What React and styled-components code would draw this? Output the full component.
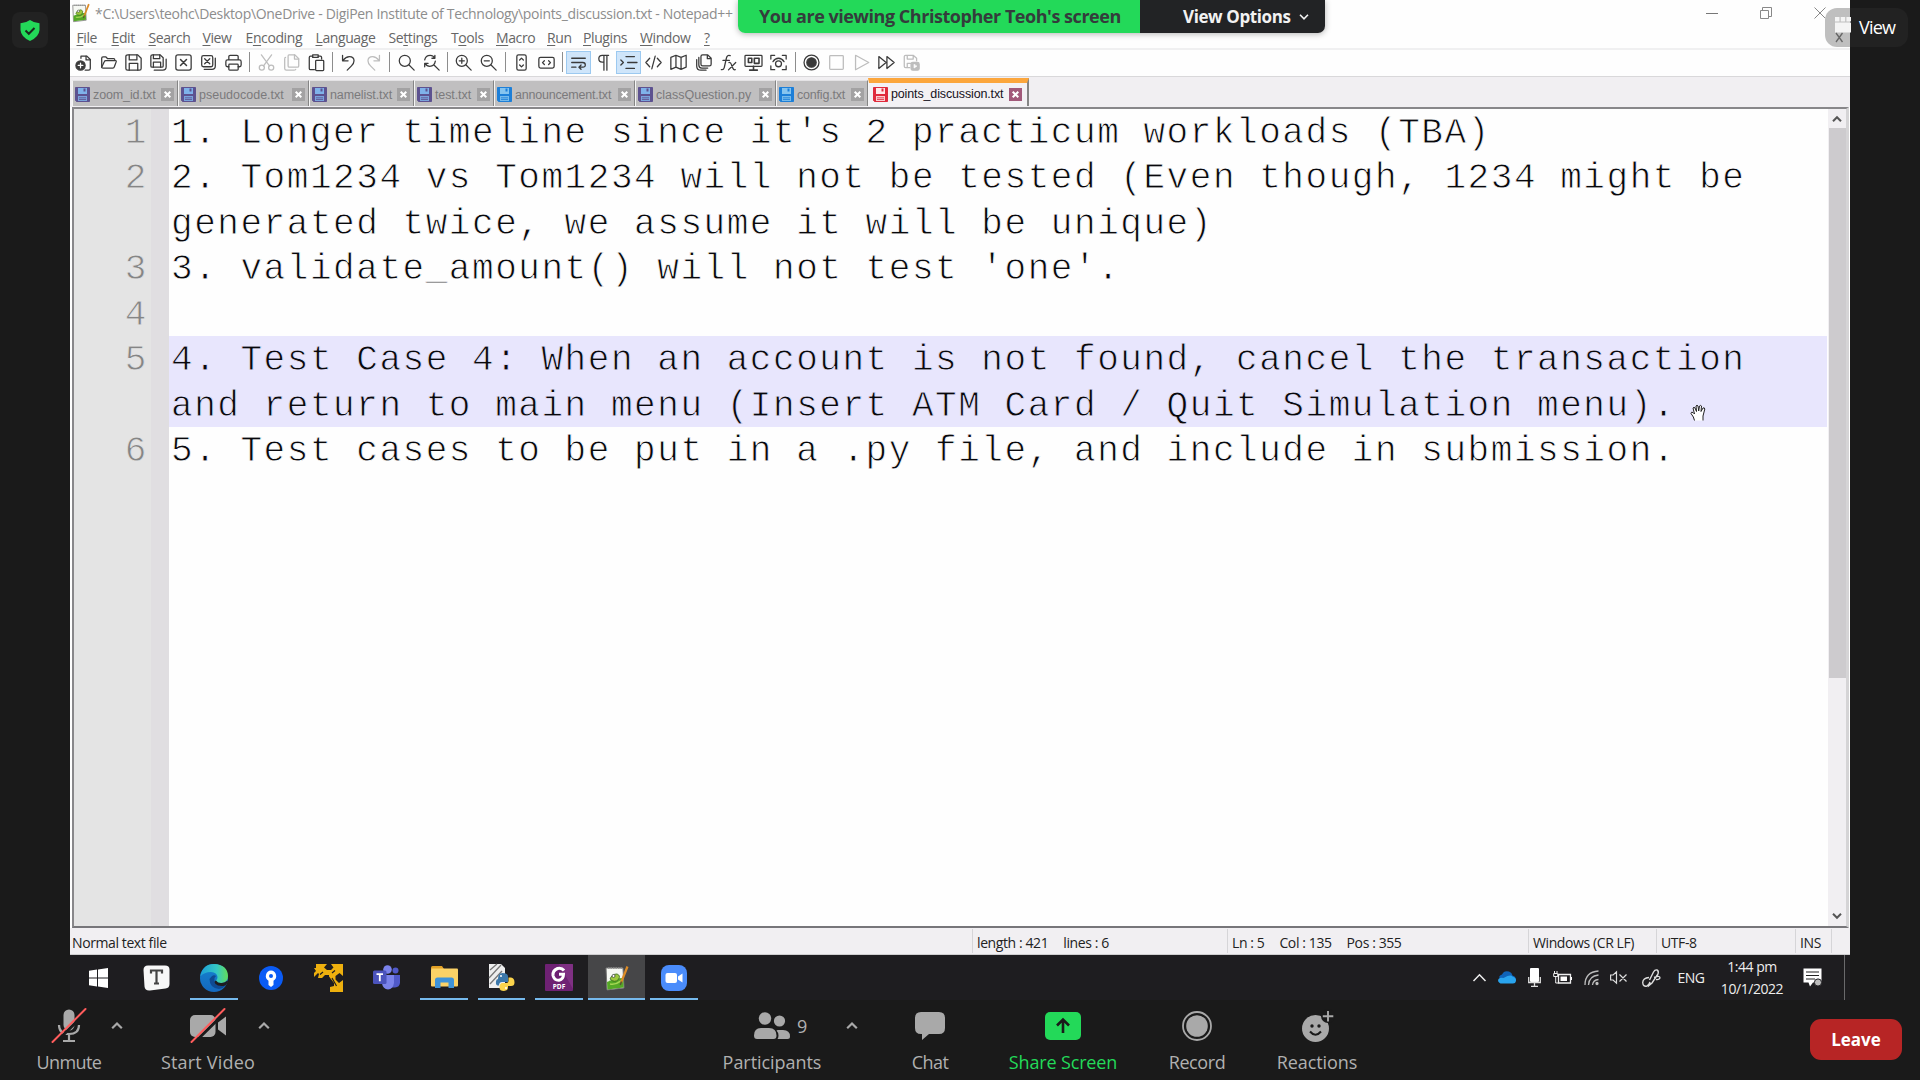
import React from "react";
import styled, { createGlobalStyle, css } from "styled-components";

const ui = `"Open Sans", "Noto Sans", sans-serif`;

const GlobalStyle = createGlobalStyle`
  * { box-sizing: border-box; }
  body { margin: 0; background: #1a1a1a; overflow: hidden; font-family: ${ui}; }
  svg { display: block; flex: none; overflow: visible; }
`;

/* ---------- meeting window ---------- */
const Meeting = styled.div`
  width: 1920px;
  height: 1080px;
  display: flex;
  flex-direction: column;
  background: #1a1a1a;
  position: relative;
`;
const Stage = styled.div`
  display: grid;
  grid-template-columns: 70px 1780px 70px;
  height: 1000px;
`;
const Side = styled.div`
  padding: 12px 0 0 12px;
`;
const ShieldButton = styled.div`
  width: 36px;
  height: 36px;
  border-radius: 8px;
  background: #222;
  display: grid;
  place-items: center;
`;
const Banner = styled.div`
  position: absolute;
  top: 0;
  left: 738px;
  width: 587px;
  height: 33px;
  display: flex;
  border-radius: 0 0 7px 7px;
  overflow: hidden;
  font-weight: 700;
  line-height: 33px;
  white-space: nowrap;
  box-shadow: 0 1px 6px rgba(0, 0, 0, 0.3);
`;
const BannerText = styled.div`
  width: 402px;
  background: #23d959;
  color: #343c3c;
  padding-left: 21px;
  font-size: 18px;
  letter-spacing: -0.46px;
`;
const BannerMenu = styled.div`
  flex: 1;
  background: #222325;
  color: #f2f2f2;
  padding-left: 43px;
  display: flex;
  align-items: center;
  gap: 9px;
  font-size: 17px;
  letter-spacing: -0.4px;
`;
const ViewButton = styled.div`
  position: absolute;
  top: 8px;
  left: 1825px;
  width: 83px;
  height: 39px;
  border-radius: 12px;
  background: linear-gradient(90deg, #bfbfbf 25px, #222 25px);
  display: flex;
  align-items: center;
  padding: 0 0 2px 10px;
  gap: 8px;
  color: #fff;
  font-size: 18px;
  letter-spacing: -0.8px;
`;
const Cursor = styled.div`
  position: absolute;
  left: 1690px;
  top: 404px;
`;

/* ---------- editor window ---------- */
const Desktop = styled.div`
  display: flex;
  flex-direction: column;
  background: #fefefe;
`;
const TitleBar = styled.div`
  height: 26px;
  display: flex;
  align-items: center;
  padding-left: 2px;
  gap: 5px;
  font-size: 14px;
  letter-spacing: -0.32px;
  color: #8d8d8d;
  white-space: nowrap;
`;
const WindowButtons = styled.div`
  margin-left: auto;
  display: flex;
  align-items: center;
  gap: 42px;
  padding-right: 24px;
`;
const MenuBar = styled.div`
  height: 24px;
  display: flex;
  align-items: center;
  padding: 2px 0 0 6.5px;
  border-bottom: 2px solid #f0f0f1;
  font-size: 14px;
  letter-spacing: -0.4px;
  color: #666;
`;
const MenuItem = styled.div`
  width: ${(p) => p.$w}px;
  white-space: nowrap;
  line-height: 20px;
  & > u { text-underline-offset: 2px; }
`;
const Toolbar = styled.div`
  height: 27px;
  display: flex;
  align-items: center;
  padding: 0 0 2px 1px;
  border-bottom: 1px solid #d9d8da;
`;
const Tool = styled.div`
  width: 25px;
  height: 23px;
  display: grid;
  place-items: center;
  color: ${(p) => (p.$off ? "#bdbdbd" : "#3a3a3a")};
  ${(p) => p.$on && css`background: #cfe5fa; box-shadow: inset 0 0 0 1px #9cc9f0;`}
`;
const ToolGap = styled.div`
  width: 7.57px;
  height: 20px;
  display: flex;
  justify-content: center;
  &::after { content: ""; width: 1px; background: #8d8d8d; }
`;
const TabBar = styled.div`
  height: 30px;
  background: #f1eff2;
  display: flex;
  align-items: flex-end;
  padding: 0 0 1px 2px;
`;
const Tab = styled.div`
  width: ${(p) => p.$w}px;
  height: ${(p) => (p.$active ? 28 : 26)}px;
  display: flex;
  align-items: center;
  padding: ${(p) => (p.$active ? "0 5px 1px 4px" : "2px 3px 0 2px")};
  background: ${(p) => (p.$active ? "#f3f1f4" : "#c0bfc0")};
  border-top: ${(p) => (p.$active ? "5px solid #fca63c" : "1px solid #e4e3e5")};
  border-left: 1px solid #f5f5f5;
  border-right: ${(p) => (p.$active ? 2 : 1)}px solid #858585;
  color: ${(p) => (p.$active ? "#16121c" : "#7b7a7c")};
  font: 12.5px "Liberation Sans", Arial, sans-serif;
  letter-spacing: ${(p) => p.$ls || 0}px;
  white-space: nowrap;
`;
const TabName = styled.span`
  margin-left: 3px;
`;
const TabClose = styled.span`
  margin-left: auto;
  width: 13px;
  height: 13px;
  background: ${(p) => (p.$active ? "#a2597a" : "#a3a2a3")};
  display: grid;
  place-items: center;
  color: #fff;
`;
const Editor = styled.div`
  height: 821px;
  margin: 0 1px 0 2px;
  display: grid;
  grid-template-columns: 77px 18px 1fr 18px;
  border: 2px solid #88878a;
  border-right-width: 3px;
  border-right-color: #d5d4d6;
  border-bottom-color: #77767a;
  font: 36px/45.43px "Liberation Mono", "Courier New", monospace;
  letter-spacing: 1.55px;
  color: #08080c;
`;
const Numbers = styled.div`
  background: #e4e4e4;
  color: #858585;
  text-align: right;
  padding-right: 3px;
  -webkit-text-stroke: 0.8px #e4e4e4;
`;
const NumberCell = styled.div`
  height: ${(p) => p.$rows * 45.43}px;
  padding-top: 2px;
`;
const Fold = styled.div`
  background: #e0dee1;
`;
const Lines = styled.div`
  background: #fefefe;
`;
const TextLine = styled.div`
  height: ${(p) => p.$rows * 45.43}px;
  padding: 2px 0 0 2px;
  margin-right: 1px;
  white-space: pre;
  background: ${(p) => (p.$current ? "#e8e6fd" : "#fefefe")};
  -webkit-text-stroke: 0.8px ${(p) => (p.$current ? "#e8e6fd" : "#fefefe")};
`;
const ScrollBar = styled.div`
  background: #f1eff2;
  display: flex;
  flex-direction: column;
  align-items: center;
`;
const ScrollArrow = styled.div`
  height: 19px;
  display: grid;
  place-items: center;
  margin-top: ${(p) => (p.$bottom ? "auto" : 0)};
  padding-bottom: ${(p) => (p.$bottom ? 2 : 0)}px;
`;
const Thumb = styled.div`
  width: 17px;
  height: 550px;
  background: #cdcbce;
`;
const StatusBar = styled.div`
  height: 27px;
  background: #f1eff2;
  border-bottom: 1px solid #cfced0;
  display: flex;
  align-items: center;
  font-size: 14px;
  letter-spacing: -0.4px;
  color: #222;
`;
const StatusCell = styled.div`
  width: ${(p) => p.$w}px;
  height: 24px;
  line-height: 27px;
  display: flex;
  gap: ${(p) => p.$gap || 0}px;
  padding-left: ${(p) => p.$pad || 4}px;
  border-right: 1px solid #d6d5d8;
  white-space: nowrap;
`;

/* ---------- windows taskbar ---------- */
const Taskbar = styled.div`
  height: 45px;
  background: #1e1d20;
  display: flex;
`;
const Task = styled.div`
  width: 57.55px;
  height: 45px;
  position: relative;
  display: grid;
  place-items: center;
  background: ${(p) => (p.$active ? "#464648" : "transparent")};
  ${(p) => p.$open && css`
    &::after {
      content: "";
      position: absolute;
      bottom: 0;
      left: ${p.$active ? 0 : 5}px;
      right: ${p.$active ? 0 : 5}px;
      height: 2px;
      background: #76b9ed;
    }
  `}
`;
const Tray = styled.div`
  margin-left: auto;
  display: flex;
  align-items: center;
  color: #eee;
  font-size: 14px;
`;
const TrayCell = styled.div`
  width: ${(p) => p.$w}px;
  display: grid;
  place-items: center;
  letter-spacing: -0.5px;
`;
const Clock = styled.div`
  width: 82px;
  text-align: center;
  font-size: 14px;
  line-height: 21.5px;
  letter-spacing: -0.45px;
`;
const ShowDesktop = styled.div`
  width: 6px;
  height: 45px;
  margin-left: 13px;
  border-left: 1px solid #6a6a6c;
`;

/* ---------- meeting controls ---------- */
const Controls = styled.div`
  height: 80px;
  display: flex;
  color: #a9a9a9;
`;
const Control = styled.div`
  width: ${(p) => p.$w}px;
  margin-left: ${(p) => p.$ml}px;
  display: flex;
  flex-direction: column;
  align-items: center;
  font-size: 18px;
  letter-spacing: ${(p) => p.$ls ?? -0.2}px;
  white-space: nowrap;
  color: ${(p) => (p.$green ? "#23d959" : "#b0b0b0")};
`;
const ControlIcon = styled.div`
  height: 52px;
  display: flex;
  align-items: center;
  gap: 7px;
  padding-left: ${(p) => p.$shift || 0}px;
`;
const ControlLabel = styled.div`
  line-height: 20px;
`;
const CaretBox = styled.div`
  width: 14px;
  height: 52px;
  margin-left: ${(p) => p.$ml || 0}px;
  display: grid;
  place-items: center;
`;
const Leave = styled.div`
  margin: 19px 18px 0 auto;
  width: 92px;
  height: 41px;
  border-radius: 11px;
  background: #b72525;
  color: #fff;
  font-weight: 700;
  font-size: 17px;
  line-height: 41px;
  text-align: center;
`;

/* ---------- icons ---------- */
const Line = ({ children, s = 19, w = 1.5 }) => (
  <svg width={s} height={s} viewBox="0 0 20 20" fill="none" stroke="currentColor" strokeWidth={w} strokeLinejoin="round" strokeLinecap="round">
    {children}
  </svg>
);
const Chevron = ({ up, w = 10, sw = 2, color = "currentColor" }) => (
  <svg width={w} height={w * 0.6} viewBox="0 0 10 6" fill="none" stroke={color} strokeWidth={sw}>
    <path d={up ? "M1 5.3 5 1.2 9 5.3" : "M1 .8 5 4.8 9 .8"} />
  </svg>
);
const Cross = ({ s = 7, w = 2 }) => (
  <svg width={s} height={s} viewBox="0 0 7 7" stroke="currentColor" strokeWidth={w}>
    <path d="M.7.7l5.6 5.6M6.3.7.7 6.3" />
  </svg>
);

const tools = [
  [<><path d="M7 5V2.500h7l4 4V17q0 2-2 2h-4" /><path d="M13 2.500V7h5" /><circle cx="6.500" cy="13.500" r="5.400" fill="currentColor" /><path d="M6.500 10.800v5.400M3.800 13.500h5.400" stroke="#fff" /></>],
  [<><path d="M2 15.500V5q0-1.500 1.500-1.500H7L9 5.500h7q1.500 0 1.500 2" /><path d="M2 15.500 5 9q.5-1.200 2-1.200h11q1.500 0 1 1.500l-2 5.500q-.5 1.700-2 1.700H3.500q-1.500 0-1.500-1Z" /></>],
  [<><path d="M3.500 1H15l4 4v12q0 2-2 2H3q-2 0-2-2V3q0-2 2.500-2Z" /><path d="M5 1v6h9V1M5 19v-8h10v8" /></>],
  [<><path d="M3 1H12l3.500 3.500v9.500q0 1.500-1.500 1.500H2.500Q1 15.500 1 14V2.500Q1 1 3 1Z" /><path d="M4 1v4.500h7.500V1M4 15.500v-6h8.500v6M5 19h10q4 0 4-4V6" /></>],
  [<><rect x="1" y="1" width="18" height="18" rx="2.500" /><path d="M6.500 6.500l7 7M13.500 6.500l-7 7" strokeWidth="1.800" /></>],
  [<><rect x="2" y="2" width="13" height="13" rx="2" /><path d="M5.500 5.500l6 6M11.500 5.500l-6 6M5 18h9q4 0 4-4V5" /></>],
  [<><path d="M4.500 7V3q0-1.500 1.500-1.500h8q1.500 0 1.500 1.500v4M4.500 15H3q-2 0-2-2V9q0-2 2-2h14q2 0 2 2v4q0 2-2 2h-1.500" /><rect x="4.500" y="12" width="11" height="7" rx="1" /></>],
  null,
  [<><path d="M4 1l9.500 13M16 1 6.500 14" /><circle cx="4.500" cy="16" r="3" /><circle cx="15.500" cy="16" r="3" /></>, "off"],
  [<><path d="M7 1h7l4.500 4.500V14q0 1.500-1.500 1.500H7.500Q6 15.500 6 14V2.500Q6 1 7 1Z" /><path d="M13.500 1v5h5M3 4Q2 4 2 6v11q0 2 2 2h9q2 0 2-1" /></>, "off"],
  [<><path d="M7.500 18.500H3q-1.500 0-1.500-1.500V4q0-1.500 1.500-1.500h2.500M12 2.500h2.500Q16 2.500 16 4v2" /><path d="M5.500 1h6.500v3H5.500Z" /><rect x="9" y="7.500" width="9.500" height="12" rx="1" /></>],
  null,
  [<path d="M3 1.500V8h6.500M3.500 7.500Q7 3 11 3q5.500 0 5.500 5 0 3-3 6l-5 5" />],
  [<path d="M17 1.500V8h-6.500M16.500 7.500Q13 3 9 3 3.500 3 3.500 8q0 3 3 6l5 5" />, "off"],
  null,
  [<><circle cx="8" cy="8" r="6.500" /><path d="M13 13l6 6" /></>],
  [<><path d="M2 7q1-5.500 6.500-5.500 3.500 0 5 3M14 1.500V5h-3.500M14.500 8.500q-1 6-6.500 6-3.500 0-5.500-3.500M2 15v-4h4M13.500 13.500l5.500 5.500" /></>],
  null,
  [<><circle cx="8" cy="8" r="6.500" /><path d="M13 13l6 6M8 5v6M5 8h6" /></>],
  [<><circle cx="8" cy="8" r="6.500" /><path d="M13 13l6 6M5 8h6" /></>],
  null,
  [<><rect x="4.500" y="1" width="11" height="18" rx="2" /><path d="M7.800 7 10 4.800 12.200 7M7.800 13l2.200 2.200 2.200-2.200" /></>],
  [<><rect x="1" y="4" width="18" height="12.500" rx="2" /><path d="M7.500 8 5.300 10.200l2.200 2.200M12.500 8l2.200 2.200-2.200 2.200" /></>],
  null,
  [<><path d="M2 5h16M2 10h13q3 0 3 2.800T15 15.500h-4M2 15.500h5M13 13l-2.500 2.500L13 18" /></>, "on"],
  [<><path d="M16 1.500H8.500q-4 0-4 4t4 4H10M10.500 1.500V19M14 1.500V19" /></>],
  [<><path d="M7 3h10M9 10h11M7 17h10M1 7l3 3-3 3" /></>, "on"],
  [<><path d="M5.500 5 1 10l4.500 5M14.500 5l4.500 5-4.500 5M12 2.500 8 17.500" /></>],
  [<><path d="M1 4l6-2.500 6 2.500 6-2.500v14L13 18l-6-2.500L1 18ZM7 1.500v14M13 4v14" /></>],
  [<><path d="M9 1h6l4 4v7q0 2-2 2H9q-2 0-2-2V3q0-2 2-2ZM14.500 1v4.500H19" /><path d="M4.500 4v9q0 3.500 3.500 3.500h7M2 6.500V14q0 5 5 5h6" /></>],
  [<><path d="M12 2q-3.500-1.500-4.500 3L5 16q-.8 3-3.500 2.300M3.500 7.500H11" /><path d="M10.500 10q2-.5 3 2.500l1.500 4q1 2.500 3 2M18.500 10 10 18.700" /></>],
  [<><rect x="0" y="1.500" width="20" height="13" rx="1" /><path d="M4 5h4v5h-4ZM11 5h5.500v6h-5.500ZM10 14.500V19M5.500 19h9" strokeWidth="1.900" /></>],
  [<><path d="M1 6V1.500h4.500M14.500 1.500H19V6M19 14v4.500h-4.500M5.500 18.500H1V14M3.500 9q2.500-4 6.500-4t6.500 4" /><circle cx="10" cy="11.500" r="3.500" /></>],
  null,
  [<><circle cx="10" cy="10" r="8.800" /><circle cx="10" cy="10" r="5.500" fill="currentColor" /></>],
  [<rect x="2" y="2" width="16" height="16" rx="1" />, "off"],
  [<path d="M3 1.500 18.500 10 3 18.500Z" />, "off"],
  [<path d="M1 3l8.500 7L1 17ZM10.500 3l8.500 7-8.500 7Z" />],
  [<><path d="M8 16H3q-1.500 0-1.500-1.500V3Q1.500 1.500 3 1.500h9L16 5v3M5 1.500V6h7V1.500M5 16v-5h4" /><rect x="9.500" y="10" width="9.500" height="9" rx="2" fill="currentColor" /><path d="M13 12.500v4l3-2Z" stroke="#fff" fill="#fff" strokeWidth=".8" /></>, "off"],
];

const floppyColors = {
  violet: ["#5d5290", "#7fb2ea"],
  blue: ["#1d7fd8", "#86c4ef"],
  red: ["#e02a3c", "#ffe9ea"],
};
const Floppy = ({ kind }) => {
  const [a, b] = floppyColors[kind];
  return (
    <svg width="15" height="15" viewBox="0 0 15 15">
      <path d="M.5.5h14v14h-13l-1-1Z" fill={a} stroke={a} />
      <path d="M3 1h9v6H3Z" fill={b} />
      <path d="M8.500 1.500h2v3h-2Z" fill={a} />
      <path d="M3 9h9v5H3Z" fill={b} opacity=".85" />
      <path d="M4 10.800h7M4 12.500h7" stroke={a} strokeWidth=".8" />
    </svg>
  );
};
const NppIcon = ({ s = 18 }) => (
  <svg width={s} height={s * 1.08} viewBox="0 0 24 26">
    <path d="M1 3h17l1 20-17 2Z" fill="#f6f8f3" stroke="#777" strokeWidth="1" />
    <path d="M2 17q8-4 16.300-4l.4 9.500-16.300 2Z" fill="#55a826" />
    <path d="M5 14q2-5 7-5 4 1.500 1.500 5.500-4 4-8.500-.5Z" fill="#9cc83c" stroke="#35651c" strokeWidth=".8" />
    <circle cx="8.500" cy="11" r="1.500" fill="#fff" stroke="#333" strokeWidth=".7" />
    <path d="M5 19q6 1 11-3" stroke="#a5d653" strokeWidth="1.500" fill="none" />
    <path d="M3 3h14" stroke="#8c8c8c" strokeWidth="1.500" strokeDasharray="1.500 1" />
    <path d="M22.500 1.500 16 18" stroke="#dc8b26" strokeWidth="2.300" />
    <path d="M16.500 16.500 15.300 20" stroke="#553" strokeWidth="1.500" />
  </svg>
);

const tabs = [
  ["zoom_id.txt", 106, "violet", -0.12],
  ["pseudocode.txt", 131, "violet", 0],
  ["namelist.txt", 105, "violet", -0.1],
  ["test.txt", 80, "violet", -0.1],
  ["announcement.txt", 141, "blue", -0.2],
  ["classQuestion.py", 141, "violet", 0],
  ["config.txt", 92, "blue", -0.2],
  ["points_discussion.txt", 161, "red", -0.14],
];

const menus = [
  ["", "F", "ile", 35], ["", "E", "dit", 37], ["", "S", "earch", 54], ["", "V", "iew", 43],
  ["E", "n", "coding", 70], ["", "L", "anguage", 73], ["Se", "t", "tings", 62.5], ["T", "o", "ols", 45],
  ["", "M", "acro", 51], ["", "R", "un", 36], ["", "P", "lugins", 57], ["", "W", "indow", 64], ["", "?", "", 20],
];

const doc = [
  ["1. Longer timeline since it's 2 practicum workloads (TBA)"],
  ["2. Tom1234 vs Tom1234 will not be tested (Even though, 1234 might be", "generated twice, we assume it will be unique)"],
  ["3. validate_amount() will not test 'one'."],
  [""],
  ["4. Test Case 4: When an account is not found, cancel the transaction", "and return to main menu (Insert ATM Card / Quit Simulation menu)."],
  ["5. Test cases to be put in a .py file, and include in submission."],
];

const tasks = [
  { icon: <svg width="19" height="20" viewBox="0 0 19 20" fill="#fff"><path d="M0 2.800 8 1.600v7.900H0ZM9 1.400 19 0v9.500H9ZM0 10.500h8v7.900L0 17.200ZM9 10.500h10V20L9 18.600Z" /></svg> },
  { icon: <svg width="27" height="26" viewBox="0 0 27 26"><path d="M5 .5h17q4.500 0 4.500 4V19q0 4-4 4.500L7 25.500q-5 .5-5.500-4L.5 5q0-4.500 4.500-4.500Z" fill="#f7f7f7" /><path d="M8 8.500V5.500h11v3M13.500 5.500v13M11 18.500h5" stroke="#444" strokeWidth="2.200" fill="none" /></svg> },
  { open: true, icon: (
    <svg width="28" height="28" viewBox="0 0 28 28">
      <defs>
        <linearGradient id="eg" x1="0" x2="1"><stop offset="0" stopColor="#1c9ed8" /><stop offset=".6" stopColor="#35c8c4" /><stop offset="1" stopColor="#63dd58" /></linearGradient>
        <linearGradient id="eb" x1="0" y1="0" x2="0" y2="1"><stop offset="0" stopColor="#1583d0" /><stop offset="1" stopColor="#1468bd" /></linearGradient>
      </defs>
      <circle cx="14" cy="14" r="14" fill="url(#eb)" />
      <path d="M.3 12.500Q2.500 0 14 0q13.500.5 14 12 0 6.500-7 7-5 0-5-2.500 1.500-1.500 1.500-3.500-.5-4.500-6.500-5-7 0-10.700 4.500Z" fill="url(#eg)" />
      <path d="M9.500 15q0 9 9.500 10 4-.5 6.500-3.500-3 .8-6 0-6-1.500-5-7.500l1.500-2q-3-2.500-6.500 3Z" fill="#0f4a92" />
      <path d="M16 16.500q2 3 6 2.500 3-.3 5.500-2.500l.5 1.500-2.500 3.500q-7 1.500-10-1.500-2-3 .5-3.500Z" fill="#1e1d20" />
    </svg>) },
  { icon: <svg width="24" height="24" viewBox="0 0 24 24"><circle cx="12" cy="12" r="12" fill="#0a5bf5" /><path d="M12 4.500a5.500 5.500 0 0 1 2.500 10.200V19L12 21l-2.500-2v-4.300A5.500 5.500 0 0 1 12 4.500Z" fill="#fff" /><circle cx="12" cy="10" r="2" fill="#0a5bf5" /></svg> },
  { icon: <svg width="29" height="28" viewBox="0 0 29 28" fill="#eeb00e"><path d="M0 4h2V0h11l-3 3.500 3 2.500h4l2.500-2.500L17 0h12v12l-3.500-3-4 3v3.500l3.500 3.500 4-3v12H16v-5l4-1v-3l-5-6.500V11h-4l-3 3H4l1-4-1-1-4 4V9l2-2Z" /><path d="M9 8 6 10.500M18 9l3-2.500M18 14l4.500 8" stroke="#1e1d20" strokeWidth="1.200" /></svg> },
  { icon: <svg width="27" height="25" viewBox="0 0 27 25"><circle cx="14.500" cy="4.500" r="4.300" fill="#7b83eb" /><circle cx="22.500" cy="5.500" r="3" fill="#5059c9" /><path d="M18 10h9v8q-.5 4-5 4.500h-4Z" fill="#5059c9" /><path d="M9 10h12v8q-1 6-6 6.500-5-.5-6-6Z" fill="#7b83eb" /><rect y="5.500" width="13.500" height="13.500" rx="1.500" fill="#4b53bc" /><path d="M3.500 9.200h6.500M6.800 9.200v7" stroke="#fff" strokeWidth="1.800" /></svg> },
  { open: true, icon: <svg width="27" height="23" viewBox="0 0 27 23"><path d="M0 1.500Q0 0 1.500 0H11l2 3H0Z" fill="#e2a126" /><rect y="2.500" width="27" height="18" rx="1" fill="#fbd266" /><path d="M4 22V14q0-2.500 2.500-2.500h14q2.500 0 2.500 2.500v8h-5.500v-5.500h-8V22Z" fill="#3f93d8" /></svg> },
  { open: true, icon: (
    <svg width="27" height="27" viewBox="0 0 27 27">
      <path d="M1 0h12l4 4v20H1Z" fill="#eee" /><path d="M1 14 13 1M2 6l7-6M2 20 14 7" stroke="#777" strokeWidth="1.300" />
      <path d="M10 15q0-6 4.500-6 5.500 0 5.500 3.500V18h-6q-3 0-3 3.500H9.500Q7.500 21 8 17.500Q8 15 10 15Z" fill="#3b77a9" />
      <path d="M20.500 13.500h2.500q3.500.5 3.500 5 0 3.500-3.500 3.500h-3v1.500q0 3-4 3.500-4.500 0-4.500-3.500 0-4.500 3-4.500h4q2 0 2-2Z" fill="#fbd44c" />
      <circle cx="13" cy="12" r="1" fill="#fff" /><circle cx="18" cy="24" r="1" fill="#fff" />
    </svg>) },
  { open: true, icon: <svg width="28" height="27" viewBox="0 0 28 27"><rect width="28" height="27" rx="1" fill="#6e2173" /><path d="M14 0h14v25Z" fill="#8b3b8e" opacity=".6" /><path d="M19 6.500Q16.500 3.300 12.500 4.500 7.500 6.500 8 11.500q1.200 5 6 4.800 4.500-1 4.500-6H14" fill="none" stroke="#fff" strokeWidth="3" /><text x="14" y="24.500" fill="#fff" fontSize="6.500" fontWeight="700" textAnchor="middle" fontFamily="Open Sans, sans-serif">PDF</text></svg> },
  { open: true, active: true, icon: <NppIcon s={24} /> },
  { open: true, icon: <svg width="26" height="26" viewBox="0 0 26 26"><rect width="26" height="26" rx="8" fill="#4a8cfb" /><rect x="4.500" y="8" width="11.500" height="10" rx="2" fill="#fff" /><path d="M17 11.500l4.500-3v9L17 14.500Z" fill="#fff" /></svg> },
];

export default function App() {
  return (
    <>
      <GlobalStyle />
      <Meeting>
        <Stage>
          <Side>
            <ShieldButton>
              <svg width="20" height="21" viewBox="0 0 20 21">
                <path d="M10 0q4 3 9.500 3.200V10q-.5 7-9.500 11Q1 17 .5 10V3.200Q6 3 10 0Z" fill="#23d959" />
                <path d="M5.500 10.500l3.300 3.300L14.500 8" fill="none" stroke="#1a2a1e" strokeWidth="2" />
              </svg>
            </ShieldButton>
          </Side>
          <Desktop>
            <TitleBar>
              <NppIcon s={18} />
              *C:\Users\teohc\Desktop\OneDrive - DigiPen Institute of Technology\points_discussion.txt - Notepad++
              <WindowButtons>
                <svg width="12" height="12" viewBox="0 0 12 12" stroke="#777"><path d="M0 6.500h12" /></svg>
                <svg width="12" height="12" viewBox="0 0 12 12" fill="none" stroke="#888"><path d="M.5 3.500h8v8h-8ZM2.500 3V.5h9v9H9" /></svg>
                <svg width="12" height="12" viewBox="0 0 12 12" stroke="#888"><path d="M.5.5l11 11M11.500.5l-11 11" /></svg>
              </WindowButtons>
            </TitleBar>
            <MenuBar>
              {menus.map(([a, u, b, w]) => (
                <MenuItem key={a + u + b} $w={w}>{a}<u>{u}</u>{b}</MenuItem>
              ))}
            </MenuBar>
            <Toolbar>
              {tools.map((t, i) =>
                t ? <Tool key={i} $off={t[1] === "off"} $on={t[1] === "on"}><Line s={17}>{t[0]}</Line></Tool> : <ToolGap key={i} />
              )}
            </Toolbar>
            <TabBar>
              {tabs.map(([name, w, kind, ls]) => (
                <Tab key={name} $w={w} $ls={ls} $active={kind === "red"}>
                  <Floppy kind={kind} />
                  <TabName>{name}</TabName>
                  <TabClose $active={kind === "red"}><Cross /></TabClose>
                </Tab>
              ))}
            </TabBar>
            <Editor>
              <Numbers>
                {doc.map((rows, i) => <NumberCell key={i} $rows={rows.length}>{i + 1}</NumberCell>)}
              </Numbers>
              <Fold />
              <Lines>
                {doc.map((rows, i) => (
                  <TextLine key={i} $rows={rows.length} $current={i === 4}>{rows.join("\n")}</TextLine>
                ))}
              </Lines>
              <ScrollBar>
                <ScrollArrow><Chevron up w={10} color="#555" /></ScrollArrow>
                <Thumb />
                <ScrollArrow $bottom><Chevron w={10} color="#555" /></ScrollArrow>
              </ScrollBar>
            </Editor>
            <StatusBar>
              <StatusCell $w={903} $pad={2}>Normal text file</StatusCell>
              <StatusCell $w={255} $gap={15}><span>length : 421</span><span>lines : 6</span></StatusCell>
              <StatusCell $w={301} $gap={15}><span>Ln : 5</span><span>Col : 135</span><span>Pos : 355</span></StatusCell>
              <StatusCell $w={128}>Windows (CR LF)</StatusCell>
              <StatusCell $w={139}>UTF-8</StatusCell>
              <StatusCell $w={36}>INS</StatusCell>
            </StatusBar>
            <Taskbar>
              {tasks.map((t, i) => <Task key={i} $open={t.open} $active={t.active}>{t.icon}</Task>)}
              <Tray>
                <TrayCell $w={28}><Chevron up w={15} sw={1} /></TrayCell>
                <TrayCell $w={28}><svg width="18" height="13" viewBox="0 0 18 13"><path d="M3 9Q-1 5 4 3.500 6-1 11 .5q3 1 3.500 4 4 1 3 5Z" fill="#0f63b8" /><path d="M2.500 12.500Q-1 10.500.5 8q2-2 5-1l4-2q4-1 5 .5 4 1 3.500 4.500-.5 2.500-3 2.500Z" fill="#29a4ee" /></svg></TrayCell>
                <TrayCell $w={27}><svg width="13" height="19" viewBox="0 0 13 19"><rect x="2" width="9" height="14" rx="1" fill="#fff" /><path d="M.7 9v5.500h11.600V9M6.500 15v3M3 18.300h7" stroke="#ddd" strokeWidth="1.300" fill="none" /></svg></TrayCell>
                <TrayCell $w={29}><svg width="19" height="14" viewBox="0 0 19 14"><path d="M5.500 3.500h12v8.500h-12Z" fill="none" stroke="#eee" strokeWidth="1.300" /><path d="M7.500 5.500h6.500v4.500H7.500ZM18 6h1v3h-1Z" fill="#fff" /><path d="M.7 2.500h4v3h-4ZM1.500 0v2M4 0v2M2.700 5.500V12h3" stroke="#eee" fill="none" /></svg></TrayCell>
                <TrayCell $w={29}><svg width="15" height="15" viewBox="0 0 15 15" fill="none" stroke="#bbb" strokeWidth="1.300"><path d="M1 15Q1 2 14.500 1M4.500 15Q5 6 14.500 5M8.500 15q.5-5 6-5.500" /><circle cx="13" cy="13.500" r="1" fill="#fff" /></svg></TrayCell>
                <TrayCell $w={25}><svg width="18" height="13" viewBox="0 0 18 13" fill="none" stroke="#ddd" strokeWidth="1.200"><path d="M.6 4h2.500L6.500.8v11.400L3.100 9H.6ZM9.500 3.500l7 7M16.500 3.500l-7 7" /></svg></TrayCell>
                <TrayCell $w={40}><svg width="19" height="18" viewBox="0 0 19 18" fill="none" stroke="#ddd" strokeWidth="1.400"><path d="M8 13 7 16.500 10 14l6-9q1-3-1-4-2-.5-3.500 2L7.500 11M7 8.500q-6 .5-6.300 5Q1 18 5 17q2-1 3-4M12 8.500q6-2.500 6 .5-1 2-4 1.500" /></svg></TrayCell>
                <TrayCell $w={40}>ENG</TrayCell>
                <Clock>1:44 pm<br />10/1/2022</Clock>
                <TrayCell $w={38}><svg width="19" height="19" viewBox="0 0 19 19"><path d="M.5.5h18V14.500H10L7 18.500 5.500 14.500h-5Z" fill="#fff" /><path d="M3 4h13M3 7.500h13M3 11h9" stroke="#222" strokeWidth="1.200" /><circle cx="15" cy="14.500" r="3.600" fill="#bbb" stroke="#1e1d20" /></svg></TrayCell>
                <ShowDesktop />
              </Tray>
            </Taskbar>
          </Desktop>
        </Stage>

        <Controls>
          <Control $w={82} $ml={28} $ls={-0.6}>
            <ControlIcon>
              <svg width="36" height="36" viewBox="0 0 36 36">
                <rect x="12.500" y="1.500" width="11" height="21" rx="5.500" fill="#a9a9a9" />
                <path d="M8 17q0 9 10 9t10-9M18 26v6M12 33h12" fill="none" stroke="#a9a9a9" strokeWidth="2.200" />
                <path d="M3.500 35.500 37 2.500" stroke="#1a1a1a" strokeWidth="3" />
                <path d="M1.500 34 34.500 1" stroke="#ff5c5c" strokeWidth="2" strokeLinecap="round" />
              </svg>
            </ControlIcon>
            <ControlLabel>Unmute</ControlLabel>
          </Control>
          <CaretBox><Chevron up w={12} sw={1.8} /></CaretBox>
          <Control $w={98} $ml={35} $ls={0.2}>
            <ControlIcon>
              <svg width="36" height="36" viewBox="0 0 36 36">
                <rect x="0" y="7" width="25.500" height="22" rx="5" fill="#a9a9a9" />
                <path d="M28 14.500l8-6v19l-8-6Z" fill="#a9a9a9" />
                <path d="M3.500 35.500 37 2.500" stroke="#1a1a1a" strokeWidth="3" />
                <path d="M1.500 34 34.500 1" stroke="#ff5c5c" strokeWidth="2" strokeLinecap="round" />
              </svg>
            </ControlIcon>
            <ControlLabel>Start Video</ControlLabel>
          </Control>
          <CaretBox><Chevron up w={12} sw={1.8} /></CaretBox>

          <Control $w={104} $ml={449} $ls={-0.05}>
            <ControlIcon $shift={17}>
              <svg width="36" height="28" viewBox="0 0 36 28" fill="#a9a9a9">
                <circle cx="11" cy="6.500" r="6.200" /><circle cx="25.500" cy="9" r="5.600" />
                <path d="M0 23.500q0-7.500 7-7.500h8q7.500 0 7.500 7.500 0 3.500-3 3.500H3q-3 0-3-3.500Z" />
                <path d="M23.800 18h5.200q7 0 7 6.500 0 2.500-2.500 2.500H23.500q1-1.500 1-3.500 0-3-2-5Z" />
              </svg>
              9
            </ControlIcon>
            <ControlLabel>Participants</ControlLabel>
          </Control>
          <CaretBox $ml={21}><Chevron up w={12} sw={1.8} /></CaretBox>
          <Control $w={84} $ml={29} $ls={-0.6}>
            <ControlIcon>
              <svg width="30" height="28" viewBox="0 0 30 28"><path d="M6 0h18q6 0 6 6v10q0 6-6 6H14L7 28V22H6q-6 0-6-6V6Q0 0 6 0Z" fill="#a9a9a9" /></svg>
            </ControlIcon>
            <ControlLabel>Chat</ControlLabel>
          </Control>
          <Control $w={120} $ml={31} $ls={-0.15} $green>
            <ControlIcon>
              <svg width="36" height="28" viewBox="0 0 36 28"><rect width="36" height="28" rx="5" fill="#23d959" /><path d="M18 21V8.500M12 13.500l6-6 6 6" stroke="#1a1a1a" strokeWidth="2.600" fill="none" /></svg>
            </ControlIcon>
            <ControlLabel>Share Screen</ControlLabel>
          </Control>
          <Control $w={80} $ml={34} $ls={-0.4}>
            <ControlIcon>
              <svg width="30" height="30" viewBox="0 0 30 30"><circle cx="15" cy="15" r="14" fill="none" stroke="#a9a9a9" strokeWidth="1.800" /><circle cx="15" cy="15" r="10.800" fill="#a9a9a9" /></svg>
            </ControlIcon>
            <ControlLabel>Record</ControlLabel>
          </Control>
          <Control $w={100} $ml={30} $ls={-0.1}>
            <ControlIcon>
              <svg width="31" height="31" viewBox="0 0 31 31">
                <circle cx="13.500" cy="17.500" r="13.500" fill="#a9a9a9" />
                <circle cx="26" cy="5" r="7" fill="#1a1a1a" />
                <path d="M26 0v10.500M20.800 5.200h10.500" stroke="#a9a9a9" strokeWidth="1.900" />
                <circle cx="10" cy="15" r="1.700" fill="#1a1a1a" /><circle cx="17" cy="15" r="1.700" fill="#1a1a1a" />
                <path d="M8 20.500q5.500 6.500 11 0" fill="none" stroke="#1a1a1a" strokeWidth="2" />
              </svg>
            </ControlIcon>
            <ControlLabel>Reactions</ControlLabel>
          </Control>
          <Leave>Leave</Leave>
        </Controls>

        <Banner>
          <BannerText>You are viewing Christopher Teoh's screen</BannerText>
          <BannerMenu>View Options <Chevron w={10} sw={1.6} /></BannerMenu>
        </Banner>
        <ViewButton>
          <svg width="16" height="28" viewBox="0 0 16 28">
            <path d="M0 4h4.500v4.500H0ZM5.700 4h4.500v4.500H5.700ZM11.400 4h4.600v4.500h-4.600ZM0 9.500h16v10H0Z" fill="#f4f4f4" />
            <path d="M1 20l6.500 9M7.500 20 1 29" stroke="#666" strokeWidth="1.300" />
          </svg>
          View
        </ViewButton>
        <Cursor>
          <svg width="17" height="17" viewBox="0 0 17 17" fill="#fff" stroke="#222" strokeWidth="1">
            <path d="M4.500 16.500Q4 13 1 9.500q0-2 2-1L4.500 10 3 4q1-1.500 2 0l1.500 3.500L6 2q1-1.500 2 0l.7 5L9.500 2q1.200-1.200 2 0L11 7.500 13 4q1.500-.8 1.800 1L13 12v4.500" />
          </svg>
        </Cursor>
      </Meeting>
    </>
  );
}
